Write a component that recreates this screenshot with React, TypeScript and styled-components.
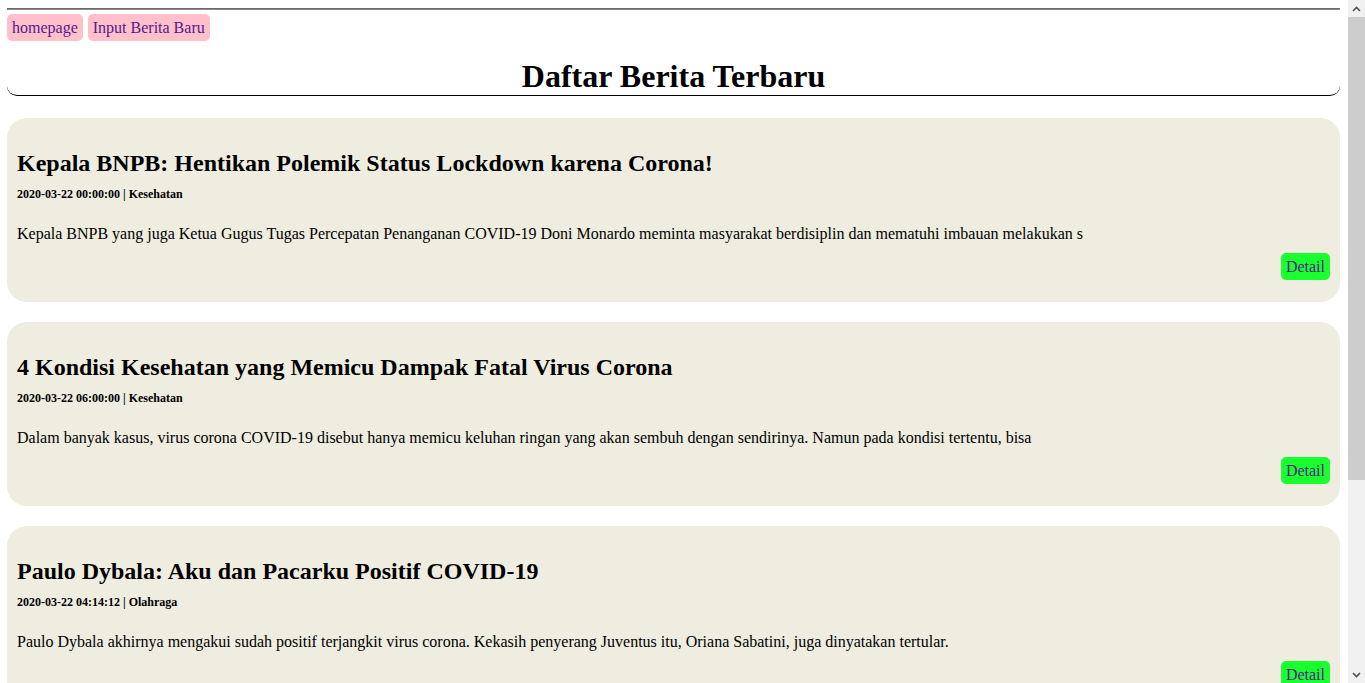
import React from 'react'
import styled, { createGlobalStyle } from 'styled-components'

const GlobalStyle = createGlobalStyle`
  body {
    margin: 8px 25px 8px 7px;
    background: #ffffff;
    color: #000000;
    font-family: "Liberation Serif", "Times New Roman", serif;
    font-size: 16px;
  }
`

const TopRule = styled.hr`
  margin: 0;
  border-style: solid;
  border-width: 1px;
  border-color: #6a6a6a #8a8a8a #8a8a8a #6a6a6a;
`

const Nav = styled.nav`
  display: flex;
  gap: 5px;
  margin-top: 4px;
`

const NavLink = styled.a`
  display: inline-block;
  padding: 4px 5px;
  line-height: 19px;
  background: #ffc0cb;
  border-radius: 5px;
  color: #551a8b;
  text-decoration: none;
`

const Header = styled.header`
  margin-top: 17px;
  border-bottom: 1px solid #000000;
  border-radius: 10px;
`

const Title = styled.h1`
  margin: 0;
  font-size: 32px;
  line-height: 37px;
  text-align: center;
`

const List = styled.main`
  display: flex;
  flex-direction: column;
  gap: 20px;
  margin-top: 22px;
  margin-bottom: 20px;
`

const Card = styled.article`
  background: #eeeddf;
  border-radius: 20px;
  padding: 31px 10px 22px;
`

const Headline = styled.h2`
  margin: 0;
  font-size: 24px;
  line-height: 28px;
`

const Meta = styled.h6`
  margin: 10px 0 0;
  font-size: 12px;
  line-height: 14px;
  font-weight: bold;
`

const Summary = styled.p`
  margin: 24px 0 0;
  line-height: 18px;
`

const Actions = styled.div`
  display: flex;
  justify-content: flex-end;
  margin-top: 10px;
`

const DetailLink = styled.a`
  display: inline-block;
  padding: 4px 5px;
  line-height: 19px;
  background: #1aff2e;
  border-radius: 5px;
  color: #551a8b;
  text-decoration: none;
`

// window scrollbar, drawn since the headless page hides its own
const Scrollbar = styled.div`
  position: fixed;
  top: 0;
  right: 0;
  width: 17px;
  height: 100vh;
  display: flex;
  flex-direction: column;
  background: #f1f1f1;
`

const ScrollArrow = styled.div`
  height: 17px;
  display: flex;
  align-items: center;
  justify-content: center;
`

const ScrollTrack = styled.div`
  flex: 1;
`

const ScrollThumb = styled.div`
  height: 463px;
  background: #cdcdcd;
`

const Chevron = ({ up }: { up?: boolean }) => (
  <svg width="9" height="6" viewBox="0 0 9 6">
    <path
      d={up ? 'M1 5 L4.5 1.5 L8 5' : 'M1 1 L4.5 4.5 L8 1'}
      fill="none"
      stroke="#505050"
      strokeWidth="1.6"
    />
  </svg>
)

type News = {
  title: string
  date: string
  category: string
  summary: string
}

const news: News[] = [
  {
    title: 'Kepala BNPB: Hentikan Polemik Status Lockdown karena Corona!',
    date: '2020-03-22 00:00:00',
    category: 'Kesehatan',
    summary:
      'Kepala BNPB yang juga Ketua Gugus Tugas Percepatan Penanganan COVID-19 Doni Monardo meminta masyarakat berdisiplin dan mematuhi imbauan melakukan s',
  },
  {
    title: '4 Kondisi Kesehatan yang Memicu Dampak Fatal Virus Corona',
    date: '2020-03-22 06:00:00',
    category: 'Kesehatan',
    summary:
      'Dalam banyak kasus, virus corona COVID-19 disebut hanya memicu keluhan ringan yang akan sembuh dengan sendirinya. Namun pada kondisi tertentu, bisa',
  },
  {
    title: 'Paulo Dybala: Aku dan Pacarku Positif COVID-19',
    date: '2020-03-22 04:14:12',
    category: 'Olahraga',
    summary:
      'Paulo Dybala akhirnya mengakui sudah positif terjangkit virus corona. Kekasih penyerang Juventus itu, Oriana Sabatini, juga dinyatakan tertular.',
  },
  {
    title: 'Jokowi Minta Rapid Test Corona Dimulai Hari Ini',
    date: '2020-03-21 15:30:00',
    category: 'Kesehatan',
    summary:
      'Presiden Joko Widodo meminta pemeriksaan cepat atau rapid test virus corona segera dilakukan untuk mendeteksi dini warga yang terpapar COVID-19.',
  },
]

function App() {
  return (
    <>
      <GlobalStyle />
      <TopRule />
      <Nav>
        <NavLink href="#">homepage</NavLink>
        <NavLink href="#">Input Berita Baru</NavLink>
      </Nav>
      <Header>
        <Title>Daftar Berita Terbaru</Title>
      </Header>
      <List>
        {news.map((item) => (
          <Card key={item.title}>
            <Headline>{item.title}</Headline>
            <Meta>
              {item.date} | {item.category}
            </Meta>
            <Summary>{item.summary}</Summary>
            <Actions>
              <DetailLink href="#">Detail</DetailLink>
            </Actions>
          </Card>
        ))}
      </List>
      <Scrollbar>
        <ScrollArrow>
          <Chevron up />
        </ScrollArrow>
        <ScrollThumb />
        <ScrollTrack />
        <ScrollArrow>
          <Chevron />
        </ScrollArrow>
      </Scrollbar>
    </>
  )
}

export default App
